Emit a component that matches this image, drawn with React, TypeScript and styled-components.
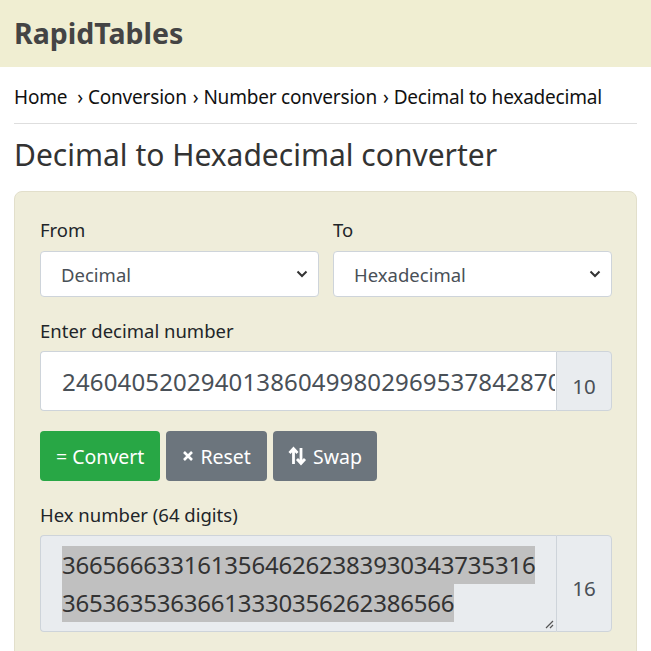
import React from "react";
import styled, { createGlobalStyle } from "styled-components";

const GlobalStyle = createGlobalStyle`
  html, body { margin: 0; padding: 0; background: #fff; }
  body { font-family: "Noto Sans", "Open Sans", sans-serif; color: #212529; }
  * { box-sizing: border-box; }
`;

const Header = styled.header`
  height: 67px;
  background: #f0eed2;
  display: flex;
  align-items: center;
  padding: 0 14px 2px;
`;

const Logo = styled.div`
  font-size: 28.5px;
  font-weight: 700;
  color: #444;
`;

const Main = styled.main`
  padding: 0 14px;
`;

const Breadcrumb = styled.nav`
  display: flex;
  align-items: center;
  height: 57px;
  padding-top: 4px;
  font-size: 19px;
  color: #111;
  border-bottom: 1px solid #dedede;
  white-space: nowrap;
  letter-spacing: -0.2px;
`;

const Sep = styled.span<{ $first?: boolean }>`
  margin: 0 5px 0 ${(p) => (p.$first ? 10 : 6)}px;
`;

const Title = styled.h1`
  margin: 13px 0 18px;
  font-size: 30px;
  font-weight: 400;
  color: #333;
  line-height: 36px;
`;

const Card = styled.section`
  background: #efedda;
  border: 1px solid #e2dfcb;
  border-radius: 8px;
  padding: 25px 24px 40px 25px;
`;

const Row = styled.div`
  display: grid;
  grid-template-columns: 1fr 1fr;
  column-gap: 14px;
`;

const Field = styled.div<{ $mt?: number }>`
  display: flex;
  flex-direction: column;
  margin-top: ${(p) => p.$mt ?? 0}px;
`;

const Label = styled.label<{ $gap?: number }>`
  font-size: 18.5px;
  color: #212529;
  line-height: 26px;
  margin-bottom: ${(p) => p.$gap ?? 7}px;
`;

const SelectWrap = styled.div`
  position: relative;
`;

const Select = styled.select`
  width: 100%;
  height: 46px;
  appearance: none;
  -webkit-appearance: none;
  background: #fff;
  border: 1px solid #ced4da;
  border-radius: 4px;
  padding: 0 20px;
  font-family: inherit;
  font-size: 18.5px;
  color: #495057;
`;

const Chevron = styled.svg`
  position: absolute;
  right: 11px;
  top: 18px;
  pointer-events: none;
`;

const Group = styled.div`
  display: flex;
`;

const Input = styled.input`
  flex: 1;
  min-width: 0;
  height: 60px;
  border: 1px solid #ced4da;
  border-right: none;
  border-radius: 4px 0 0 4px;
  padding: 0 1px 0 21px;
  font-family: inherit;
  font-size: 24px;
  color: #495057;
  background: #fff;
  letter-spacing: 0.15px;
`;

const Addon = styled.div<{ $pt?: number }>`
  width: 56px;
  display: flex;
  align-items: center;
  justify-content: center;
  background: #e9ecef;
  border: 1px solid #ced4da;
  border-radius: 0 4px 4px 0;
  font-size: 20.5px;
  color: #495057;
  padding-top: ${(p) => p.$pt ?? 6}px;
`;

const Buttons = styled.div`
  display: flex;
  gap: 6px;
  margin: 20px 0 21px;
`;

const Button = styled.button<{ $variant: "green" | "gray"; $px?: number }>`
  height: 50px;
  padding: 0 ${(p) => p.$px ?? 16}px;
  border: none;
  border-radius: 4px;
  background: ${(p) => (p.$variant === "green" ? "#28a745" : "#6c757d")};
  color: #fff;
  font-family: inherit;
  font-size: 19.5px;
  display: flex;
  align-items: center;
  gap: 6px;
`;

const TextArea = styled.div`
  flex: 1;
  position: relative;
  height: 97px;
  background: #e9ecef;
  border: 1px solid #ced4da;
  border-right: none;
  border-radius: 4px 0 0 4px;
  padding: 10px 20px 0 21px;
  font-size: 24px;
  color: #333;
  letter-spacing: -0.2px;
`;

const Line = styled.div`
  width: fit-content;
  line-height: 38px;
  height: 38px;
  background: #c0c0c0;
`;

const Grip = styled.svg`
  position: absolute;
  right: 2px;
  bottom: 2px;
`;

export default function App() {
  return (
    <>
      <GlobalStyle />
      <Header>
        <Logo>RapidTables</Logo>
      </Header>
      <Main>
        <Breadcrumb>
          <span>Home</span>
          <Sep $first>›</Sep>
          <span>Conversion</span>
          <Sep>›</Sep>
          <span>Number conversion</span>
          <Sep>›</Sep>
          <span>Decimal to hexadecimal</span>
        </Breadcrumb>
        <Title>Decimal to Hexadecimal converter</Title>
        <Card>
          <Row>
            <Field>
              <Label $gap={8}>From</Label>
              <SelectWrap>
                <Select defaultValue="dec">
                  <option value="dec">Decimal</option>
                </Select>
                <Chevron width="12" height="10" viewBox="0 0 12 10">
                  <path d="M1.5 2.5 L6 7 L10.5 2.5" fill="none" stroke="#333" strokeWidth="2" />
                </Chevron>
              </SelectWrap>
            </Field>
            <Field>
              <Label $gap={8}>To</Label>
              <SelectWrap>
                <Select defaultValue="hex">
                  <option value="hex">Hexadecimal</option>
                </Select>
                <Chevron width="12" height="10" viewBox="0 0 12 10">
                  <path d="M1.5 2.5 L6 7 L10.5 2.5" fill="none" stroke="#333" strokeWidth="2" />
                </Chevron>
              </SelectWrap>
            </Field>
          </Row>
          <Field $mt={21}>
            <Label>Enter decimal number</Label>
            <Group>
              <Input defaultValue="24604052029401386049980296953784287053193474358913071530" />
              <Addon $pt={10}>10</Addon>
            </Group>
          </Field>
          <Buttons>
            <Button $variant="green">= Convert</Button>
            <Button $variant="gray">
              <svg width="12" height="12" viewBox="0 0 12 12">
                <path d="M2 2 L10 10 M10 2 L2 10" stroke="#fff" strokeWidth="2.6" />
              </svg>
              Reset
            </Button>
            <Button $variant="gray" $px={15}>
              <svg width="19" height="20" viewBox="0 0 19 20">
                <path d="M5.5 18 V3 M1.5 7 L5.5 2.5 L9.5 7 M13 2 V17 M9 13 L13 17.5 L17 13" fill="none" stroke="#fff" strokeWidth="2.8" />
              </svg>
              Swap
            </Button>
          </Buttons>
          <Field>
            <Label>Hex number (64 digits)</Label>
            <Group>
              <TextArea>
                <Line>36656663316135646262383930343735316</Line>
                <Line>36536353636613330356262386566</Line>
                <Grip width="12" height="12" viewBox="0 0 12 12">
                  <path d="M11 4 L4 11 M11 8 L8 11" stroke="#555" strokeWidth="1.2" />
                </Grip>
              </TextArea>
              <Addon $pt={8}>16</Addon>
            </Group>
          </Field>
        </Card>
      </Main>
    </>
  );
}
